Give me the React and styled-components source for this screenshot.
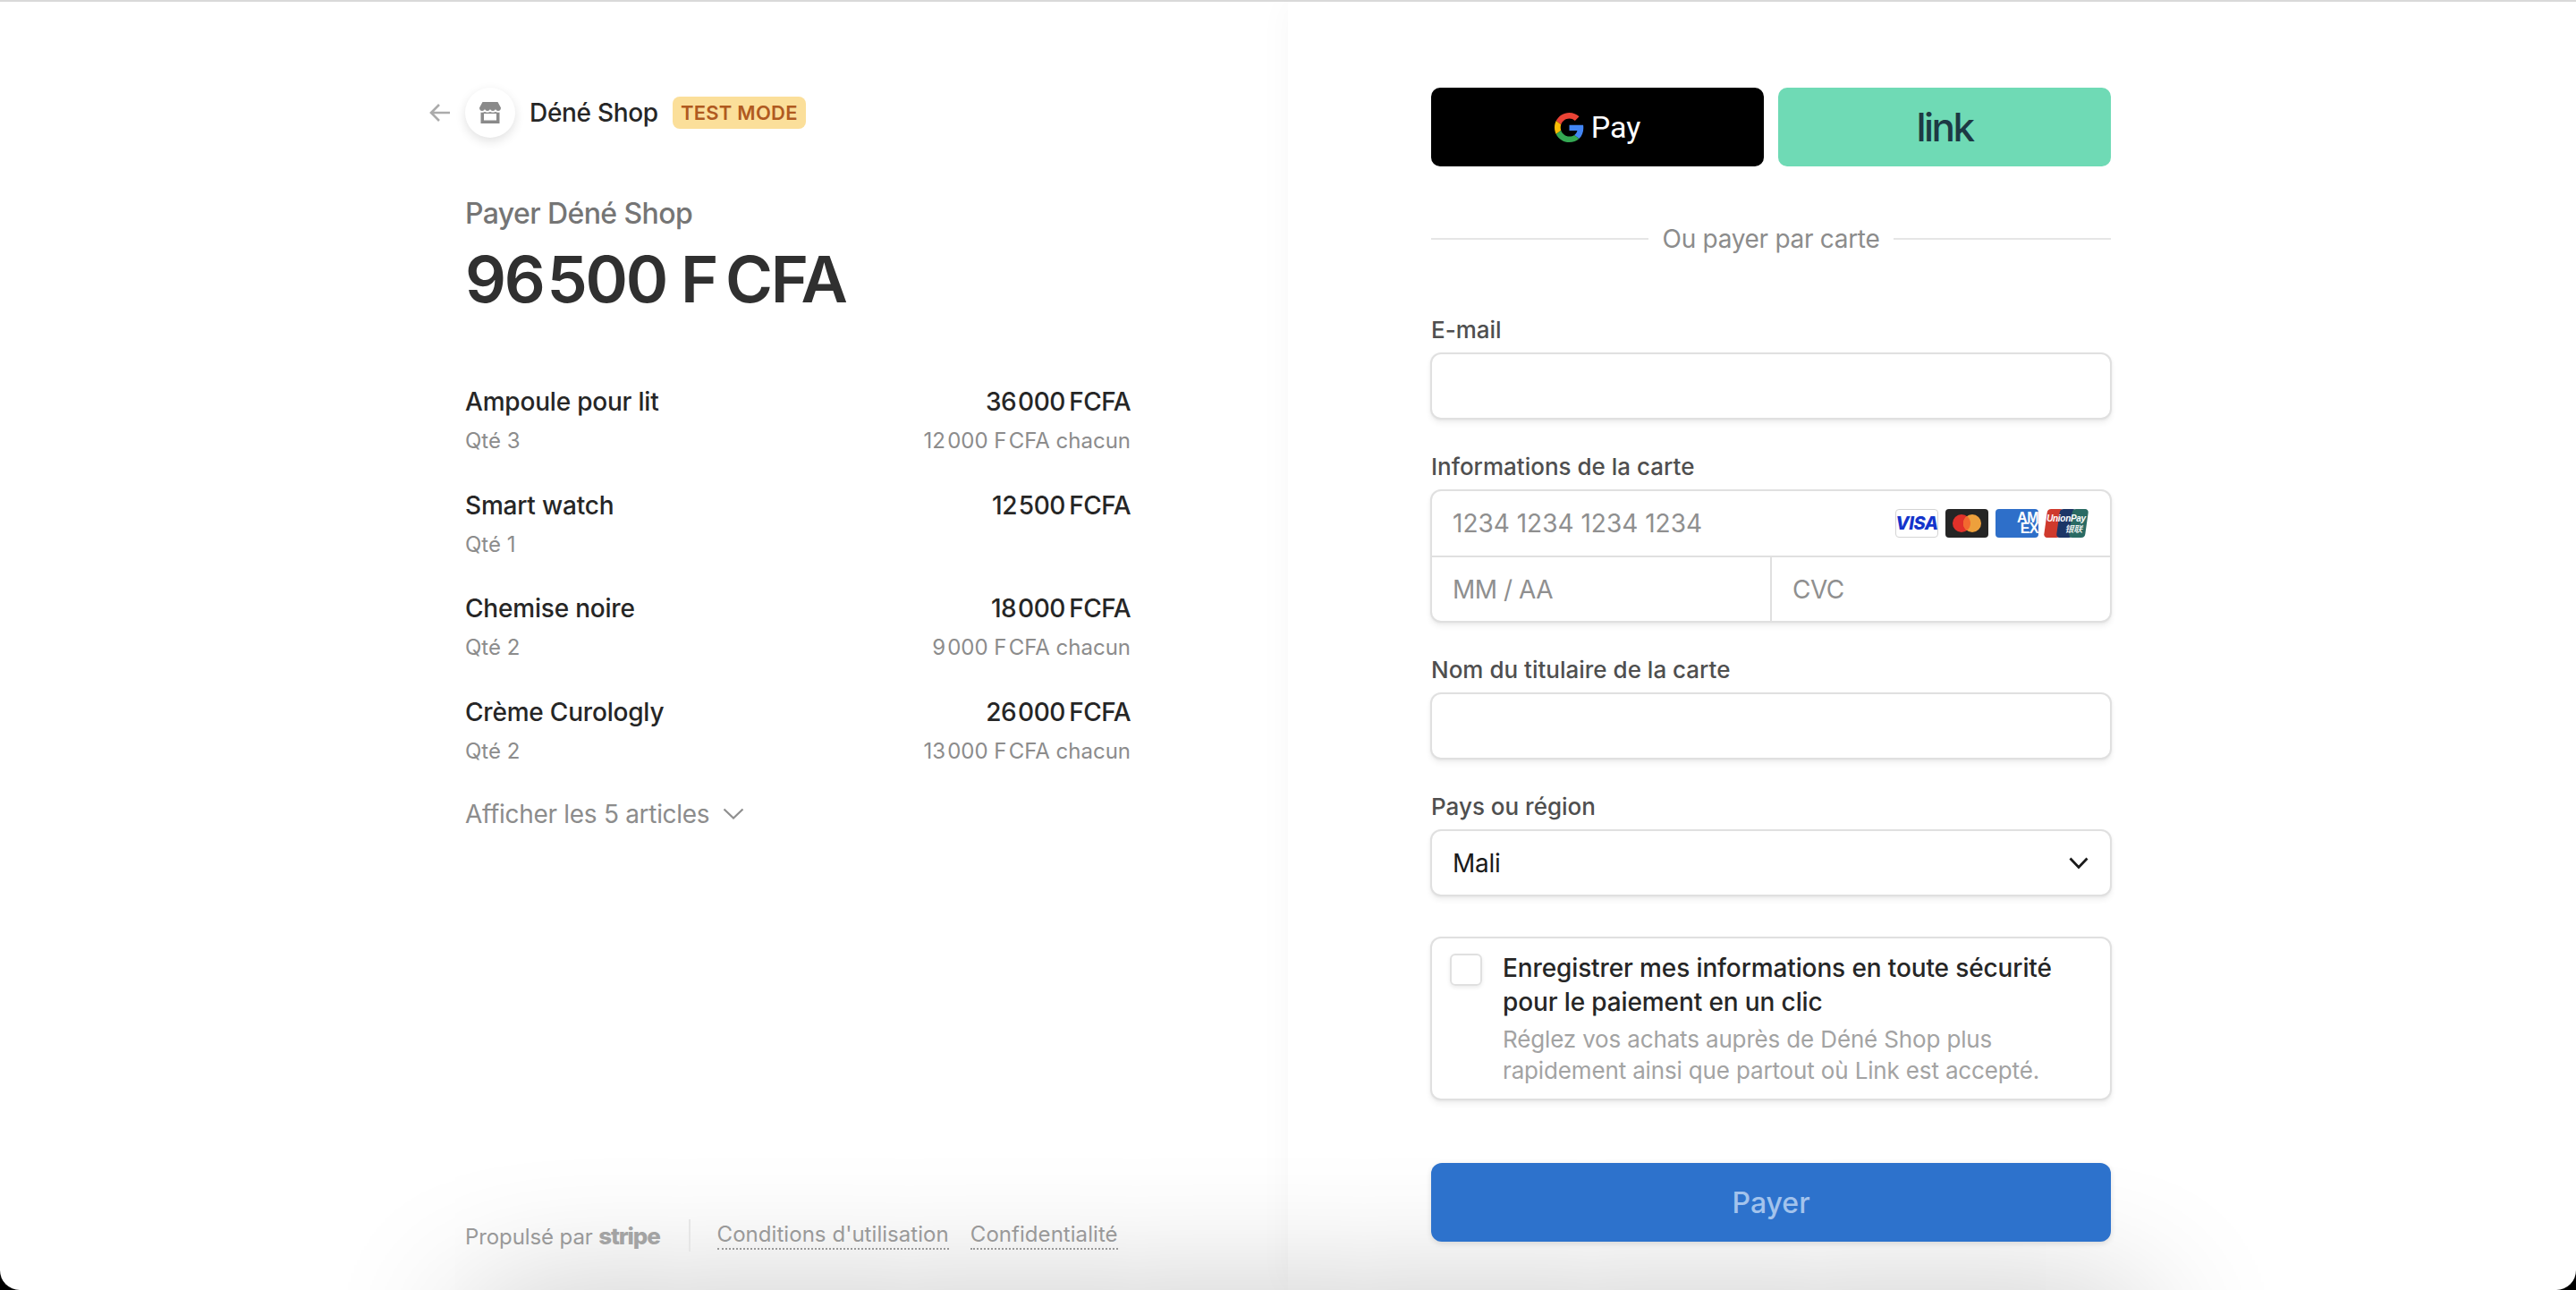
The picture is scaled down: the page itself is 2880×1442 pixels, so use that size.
import styled, { createGlobalStyle } from "styled-components";

const items = [
  { name: "Ampoule pour lit", qty: "Qté 3", total: "36\u200A000\u2009FCFA", unit: "12\u200A000 F\u200ACFA chacun" },
  { name: "Smart watch", qty: "Qté 1", total: "12\u200A500\u2009FCFA" },
  { name: "Chemise noire", qty: "Qté 2", total: "18\u200A000\u2009FCFA", unit: "9\u200A000 F\u200ACFA chacun" },
  { name: "Crème Curologly", qty: "Qté 2", total: "26\u200A000\u2009FCFA", unit: "13\u200A000 F\u200ACFA chacun" }
];

export default function App() {
  return (
    <>
      <GlobalStyle />
      <Window>
        <BottomShadow />
        <LeftPanel>
          <Header>
            <BackIcon width="24" height="22" viewBox="0 0 24 22">
              <path d="M23 11H2M11 2l-9 9 9 9" fill="none" stroke="#ababab" strokeWidth="2.6" />
            </BackIcon>
            <LogoCircle>
              <svg width="24" height="24" viewBox="0 0 24 24">
                <path d="M3.5 0h17L24 6.5C24 9 22.500 10 21 10c-1.500 0-3-1-3-2.500C18 9 16.500 10 15 10s-3-1-3-2.500C12 9 10.500 10 9 10S6 9 6 7.500C6 9 4.500 10 3 10 1.500 10 0 9 0 6.500z" fill="#8a8a8a" />
                <path d="M1.500 11.500c1.600.4 3.200.2 4.500-.6 1.800 1 4.200 1 6 0 1.800 1 4.200 1 6 0 1.300.8 2.900 1 4.500.6V24h-21zM5 13v7.500h14V13z" fill="#8a8a8a" fillRule="evenodd" />
              </svg>
            </LogoCircle>
            <ShopName>Déné Shop</ShopName>
            <TestBadge>TEST MODE</TestBadge>
          </Header>

          <Summary>
            <PayTo>Payer Déné Shop</PayTo>
            <Amount>96{"\u200A"}500 F{"\u2009"}CFA</Amount>

            <ItemList>
              {items.map((item) => (
                <ItemRow key={item.name}>
                  <ItemLine>
                    <ItemName>{item.name}</ItemName>
                    <ItemTotal>{item.total}</ItemTotal>
                  </ItemLine>
                  <ItemLine>
                    <ItemSub>{item.qty}</ItemSub>
                    <ItemSub>{item.unit}</ItemSub>
                  </ItemLine>
                </ItemRow>
              ))}
            </ItemList>

            <ShowAll>
              Afficher les 5 articles
              <svg width="24" height="13" viewBox="0 0 24 13">
                <path d="M1.500 1.500l10.500 10 10.500-10" fill="none" stroke="#8f8f8f" strokeWidth="2.200" />
              </svg>
            </ShowAll>
          </Summary>

          <Footer>
            <PoweredBy>
              Propulsé par <StripeWord>stripe</StripeWord>
            </PoweredBy>
            <FooterRule />
            <FooterLink>Conditions d'utilisation</FooterLink>
            <FooterLink>Confidentialité</FooterLink>
          </Footer>
        </LeftPanel>

        <RightPanel>
          <Express>
            <ExpressButton $bg="#000">
              <svg width="33" height="33" viewBox="0 0 48 48">
                <path fill="#EA4335" d="M24 9.500c3.540 0 6.710 1.220 9.210 3.600l6.850-6.850C35.900 2.380 30.470 0 24 0 14.620 0 6.510 5.380 2.560 13.220l7.980 6.190C12.430 13.720 17.740 9.500 24 9.500z" />
                <path fill="#4285F4" d="M46.980 24.550c0-1.570-.15-3.090-.38-4.550H24v9.020h12.940c-.58 2.960-2.260 5.480-4.780 7.180l7.730 6c4.510-4.180 7.090-10.360 7.090-17.650z" />
                <path fill="#FBBC05" d="M10.530 28.590c-.48-1.450-.76-2.990-.76-4.590s.27-3.140.76-4.590l-7.980-6.190C.92 16.460 0 20.120 0 24c0 3.880.92 7.540 2.560 10.780l7.970-6.190z" />
                <path fill="#34A853" d="M24 48c6.480 0 11.930-2.130 15.890-5.810l-7.730-6c-2.150 1.450-4.920 2.300-8.160 2.300-6.260 0-11.570-4.220-13.470-9.910l-7.980 6.190C6.510 42.620 14.620 48 24 48z" />
              </svg>
              <PayWord>Pay</PayWord>
            </ExpressButton>
            <ExpressButton $bg="#6fdab5">
              <LinkWord>link</LinkWord>
            </ExpressButton>
          </Express>

          <OrDivider>Ou payer par carte</OrDivider>

          <Fields>
            <Field>
              <Label>E-mail</Label>
              <TextInput />
            </Field>

            <Field>
              <Label>Informations de la carte</Label>
              <CardBox>
                <CardNumberRow>
                  <CardInput placeholder="1234 1234 1234 1234" />
                  <CardBrands>
                    <BrandVisa>VISA</BrandVisa>
                    <BrandMaster>
                      <svg width="32" height="20" viewBox="0 0 32 20">
                        <circle cx="10" cy="10" r="10" fill="#e1312a" />
                        <circle cx="22" cy="10" r="10" fill="#eda03c" />
                        <path d="M16 2a10 10 0 0 1 0 16 10 10 0 0 1 0-16z" fill="#f2692f" />
                      </svg>
                    </BrandMaster>
                    <BrandAmex>
                      <span>AM</span>
                      <span>EX</span>
                    </BrandAmex>
                    <BrandUnion>
                      <UnionStripe $bg="#cf3a2d" />
                      <UnionStripe $bg="#1c3566" />
                      <UnionStripe $bg="#2a6a63" />
                      <UnionText>
                        <span>UnionPay</span>
                        <UnionHan>银联</UnionHan>
                      </UnionText>
                    </BrandUnion>
                  </CardBrands>
                </CardNumberRow>
                <CardSplitRow>
                  <CardInput placeholder="MM / AA" />
                  <CardInput placeholder="CVC" />
                </CardSplitRow>
              </CardBox>
            </Field>

            <Field>
              <Label>Nom du titulaire de la carte</Label>
              <TextInput />
            </Field>

            <Field>
              <Label>Pays ou région</Label>
              <SelectBox>
                Mali
                <svg width="22" height="14" viewBox="0 0 22 14">
                  <path d="M1.500 1.500l9.500 10 9.500-10" fill="none" stroke="#1a1a1a" strokeWidth="2.800" />
                </svg>
              </SelectBox>
            </Field>
          </Fields>

          <SaveBox>
            <CheckSquare />
            <SaveText>
              <SaveTitle>Enregistrer mes informations en toute sécurité pour le paiement en un clic</SaveTitle>
              <SaveHint>Réglez vos achats auprès de Déné Shop plus rapidement ainsi que partout où Link est accepté.</SaveHint>
            </SaveText>
          </SaveBox>

          <PayButton>Payer</PayButton>
        </RightPanel>
      </Window>
    </>
  );
}

const GlobalStyle = createGlobalStyle`
  * {
    box-sizing: border-box;
  }
  body {
    margin: 0;
    background: #000;
    font-family: "Inter", "Liberation Sans", sans-serif;
    -webkit-font-smoothing: antialiased;
  }
`;

const Window = styled.div`
  position: relative;
  width: 2880px;
  height: 1442px;
  overflow: hidden;
  display: grid;
  grid-template-columns: 1440px 1440px;
  background: #fff;
  border-top: 2px solid #d9d9d9;
  border-radius: 0 0 22px 22px;
`;

const BottomShadow = styled.div`
  position: absolute;
  left: 530px;
  top: 1460px;
  width: 1860px;
  height: 100px;
  box-shadow: 0 0 160px rgba(0, 0, 0, 0.3);
`;

const LeftPanel = styled.section`
  position: relative;
  display: flex;
  flex-direction: column;
  padding: 96px 0 43px 480px;
`;

const Header = styled.div`
  display: flex;
  align-items: center;
  gap: 16px;
  height: 56px;
`;

const BackIcon = styled.svg`
  flex: none;
`;

const LogoCircle = styled.div`
  width: 56px;
  height: 56px;
  border-radius: 50%;
  display: flex;
  align-items: center;
  justify-content: center;
  background: #fff;
  box-shadow: 0 4px 12px rgba(0, 0, 0, 0.12);
`;

const ShopName = styled.span`
  font-size: 28px;
  font-weight: 500;
  letter-spacing: -0.3px;
  color: #262626;
`;

const TestBadge = styled.span`
  height: 36px;
  padding: 0 9px;
  display: flex;
  align-items: center;
  border-radius: 8px;
  background: #fbdf9a;
  color: #b05a1f;
  font-size: 22px;
  font-weight: 600;
  letter-spacing: 0.25px;
`;

const Summary = styled.div`
  width: 744px;
  margin-left: 40px;
`;

const PayTo = styled.div`
  margin-top: 65px;
  font-size: 32px;
  line-height: 40px;
  font-weight: 500;
  letter-spacing: -0.6px;
  color: #757575;
`;

const Amount = styled.div`
  margin-top: 9px;
  font-size: 72px;
  line-height: 88px;
  font-weight: 600;
  letter-spacing: -2.200px;
  color: #303030;
`;

const ItemList = styled.div`
  margin-top: 73px;
  display: flex;
  flex-direction: column;
  gap: 35.6px;
`;

const ItemRow = styled.div`
  display: flex;
  flex-direction: column;
  gap: 8px;
`;

const ItemLine = styled.div`
  display: flex;
  justify-content: space-between;
  min-height: 32px;
`;

const ItemName = styled.span`
  font-size: 28px;
  line-height: 40px;
  font-weight: 500;
  letter-spacing: -0.2px;
  color: #262626;
`;

const ItemTotal = styled(ItemName)`
  letter-spacing: -0.5px;
`;

const ItemSub = styled.span`
  font-size: 24px;
  line-height: 32px;
  color: #8c8c8c;
`;

const ShowAll = styled.div`
  margin-top: 34px;
  display: flex;
  align-items: center;
  gap: 15px;
  font-size: 28px;
  line-height: 40px;
  letter-spacing: -0.3px;
  color: #8c8c8c;
`;

const Footer = styled.footer`
  margin-top: auto;
  margin-left: 40px;
  display: flex;
  align-items: center;
  height: 36px;
  font-size: 24px;
  color: #999;
`;

const PoweredBy = styled.span`
  letter-spacing: -0.1px;
`;

const StripeWord = styled.b`
  font-size: 26px;
  font-weight: 800;
  letter-spacing: -1.200px;
  color: #a3a3a3;
`;

const FooterRule = styled.div`
  width: 2px;
  height: 36px;
  margin: 0 30px 0 32px;
  background: #e6e6e6;
`;

const FooterLink = styled.span`
  margin-right: 24px;
  letter-spacing: 0.05px;
  line-height: 30px;
  border-bottom: 2px dotted #999;
`;

const RightPanel = styled.section`
  position: relative;
  padding: 96px 0 0 160px;
  box-shadow: 0 0 36px rgba(0, 0, 0, 0.035);
  & > * {
    width: 760px;
  }
`;

const Express = styled.div`
  display: grid;
  grid-template-columns: 1fr 1fr;
  gap: 16px;
`;

const ExpressButton = styled.button`
  height: 88px;
  padding: 0;
  display: flex;
  align-items: center;
  justify-content: center;
  gap: 8px;
  border: none;
  border-radius: 10px;
  background: ${(p) => p.$bg};
`;

const PayWord = styled.span`
  font-family: "Roboto", sans-serif;
  font-size: 34px;
  color: #fff;
`;

const LinkWord = styled.span`
  font-family: "Inter", sans-serif;
  font-size: 44px;
  font-weight: 500;
  letter-spacing: -2.500px;
  color: #1d3944;
`;

const OrDivider = styled.div`
  margin-top: 63px;
  display: flex;
  align-items: center;
  gap: 16px;
  font-size: 28px;
  line-height: 36px;
  letter-spacing: -0.3px;
  color: #8c8c8c;
  &::before,
  &::after {
    content: "";
    flex: 1;
    height: 2px;
    background: #e6e6e6;
  }
`;

const Fields = styled.div`
  margin-top: 68px;
  display: flex;
  flex-direction: column;
  gap: 37px;
`;

const Field = styled.div`
  display: flex;
  flex-direction: column;
  gap: 9px;
`;

const Label = styled.label`
  font-size: 26px;
  line-height: 32px;
  font-weight: 500;
  color: #4f4f4f;
`;

const boxLook = `
  margin: 0 -1px;
  border: 2px solid #e0e0e0;
  border-radius: 12px;
  background: #fff;
  box-shadow: 0 4px 6px rgba(0, 0, 0, 0.06), 0 1px 3px rgba(0, 0, 0, 0.05);
`;

const TextInput = styled.input`
  ${boxLook}
  height: 75px;
  display: block;
  outline: none;
`;

const CardBox = styled.div`
  ${boxLook}
  height: 149px;
  display: grid;
  grid-template-rows: 74px 1fr;
`;

const CardInput = styled.input`
  min-width: 0;
  width: 100%;
  height: 100%;
  padding: 0 23px;
  border: none;
  outline: none;
  background: transparent;
  font-family: inherit;
  font-size: 28px;
  letter-spacing: -0.5px;
  &::placeholder {
    color: #8f8f8f;
    opacity: 1;
  }
`;

const CardNumberRow = styled.div`
  display: flex;
  align-items: center;
  padding-right: 26px;
  border-bottom: 2px solid #e0e0e0;
  & > ${CardInput} {
    letter-spacing: 0;
  }
`;

const CardSplitRow = styled.div`
  display: grid;
  grid-template-columns: 378px 1fr;
  & > input + input {
    border-left: 2px solid #e0e0e0;
  }
`;

const CardBrands = styled.div`
  flex: none;
  display: flex;
  gap: 8px;
`;

const BrandBase = styled.div`
  width: 48px;
  height: 32px;
  border-radius: 4px;
  display: flex;
  align-items: center;
  justify-content: center;
`;

const BrandVisa = styled(BrandBase)`
  border: 1px solid #d4d4d4;
  background: #fff;
  font-size: 20px;
  font-weight: 800;
  font-style: italic;
  letter-spacing: -0.500px;
  color: #1434cb;
`;

const BrandMaster = styled(BrandBase)`
  background: #252525;
`;

const BrandAmex = styled(BrandBase)`
  flex-direction: column;
  align-items: flex-end;
  overflow: hidden;
  background: #2e6fc9;
  color: #fff;
  font-family: "Liberation Sans", sans-serif;
  font-size: 16px;
  line-height: 12px;
  font-weight: 700;
  letter-spacing: -0.5px;
`;

const BrandUnion = styled(BrandBase)`
  position: relative;
  width: 46px;
  justify-content: flex-start;
`;

const UnionStripe = styled.div`
  width: 18px;
  height: 32px;
  margin-right: -4px;
  border-radius: 4px;
  transform: skewX(-8deg);
  background: ${(p) => p.$bg};
`;

const UnionText = styled.div`
  position: absolute;
  inset: 0;
  display: flex;
  flex-direction: column;
  align-items: center;
  justify-content: center;
  color: #fff;
  font-family: "Liberation Sans", sans-serif;
  font-size: 10px;
  line-height: 11px;
  font-weight: 700;
  font-style: italic;
  letter-spacing: -0.3px;
`;

const UnionHan = styled.span`
  align-self: flex-end;
  padding-right: 5px;
  font-family: "Noto Sans CJK SC", sans-serif;
  font-size: 10px;
  font-weight: 500;
`;

const SelectBox = styled.div`
  ${boxLook}
  height: 75px;
  padding: 0 24px 0 23px;
  display: flex;
  align-items: center;
  justify-content: space-between;
  font-size: 28px;
  letter-spacing: -0.3px;
  color: #1a1a1a;
`;

const SaveBox = styled.div`
  ${boxLook}
  margin-top: 45px;
  height: 183px;
  width: 762px;
  padding: 14px 20px 0;
  display: flex;
  gap: 23px;
`;

const CheckSquare = styled.div`
  flex: none;
  width: 36px;
  height: 36px;
  margin-top: 3px;
  border: 2px solid #e0e0e0;
  border-radius: 6px;
  box-shadow: 0 2px 4px rgba(0, 0, 0, 0.08);
`;

const SaveText = styled.div`
  flex: 1;
  min-width: 0;
`;

const SaveTitle = styled.div`
  font-size: 28px;
  line-height: 38px;
  font-weight: 500;
  letter-spacing: -0.12px;
  color: #262626;
`;

const SaveHint = styled.div`
  margin-top: 5px;
  font-size: 26px;
  line-height: 35px;
  letter-spacing: -0.15px;
  color: #a3a3a3;
`;

const PayButton = styled.button`
  margin-top: 70px;
  height: 88px;
  display: block;
  border: none;
  border-radius: 12px;
  background: #2d72cc;
  box-shadow: 0 2px 6px rgba(0, 0, 0, 0.12);
  font-family: inherit;
  font-size: 32px;
  font-weight: 500;
  color: #a3c3ec;
`;
